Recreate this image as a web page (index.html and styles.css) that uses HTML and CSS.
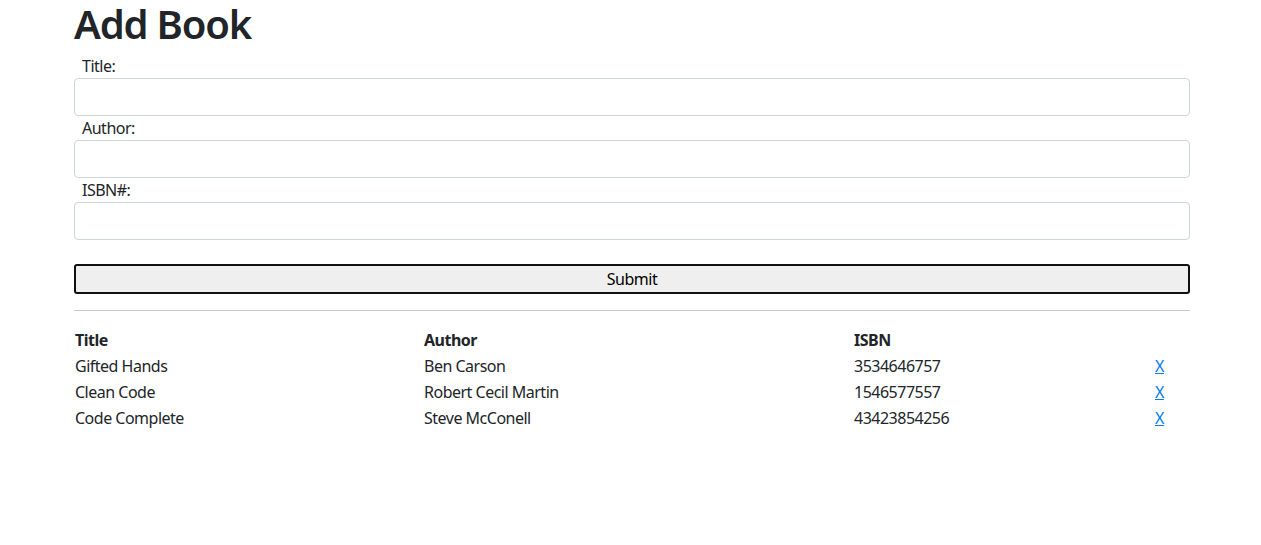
FILE: index.html
```html
<!DOCTYPE html>
<html lang="en">
<head>
<meta charset="utf-8">
<title>Add Book</title>
<link rel="stylesheet" href="styles.css">
</head>
<body>
<div class="container">
  <h1 class="title">Add Book</h1>
  <form class="book-form">
    <label class="field-label" for="title">Title:</label>
    <input class="field-input" id="title" type="text">
    <label class="field-label" for="author">Author:</label>
    <input class="field-input" id="author" type="text">
    <label class="field-label" for="isbn">ISBN#:</label>
    <input class="field-input" id="isbn" type="text">
    <button class="submit-btn" type="button">Submit</button>
  </form>
  <hr class="divider">
  <div class="book-table">
    <div class="cell head">Title</div>
    <div class="cell head">Author</div>
    <div class="cell head">ISBN</div>
    <div class="cell head"></div>

    <div class="cell">Gifted Hands</div>
    <div class="cell">Ben Carson</div>
    <div class="cell">3534646757</div>
    <div class="cell"><a class="delete" href="#">X</a></div>

    <div class="cell">Clean Code</div>
    <div class="cell">Robert Cecil Martin</div>
    <div class="cell">1546577557</div>
    <div class="cell"><a class="delete" href="#">X</a></div>

    <div class="cell">Code Complete</div>
    <div class="cell">Steve McConell</div>
    <div class="cell">43423854256</div>
    <div class="cell"><a class="delete" href="#">X</a></div>
  </div>
</div>
</body>
</html>
```
FILE: styles.css
```css
* { box-sizing: border-box; }
html, body {
  margin: 0;
  background: #fff;
}
body {
  font-family: "Noto Sans", "Open Sans", sans-serif;
  font-size: 16px;
  line-height: 1.5;
  color: #212529;
  letter-spacing: -0.5px;
}
.container {
  width: 1116px;
  margin: 0 0 0 74px;
}
.title {
  margin: 0 0 6px;
  font-size: 40px;
  font-weight: 600;
  line-height: 1.2;
  letter-spacing: -1.2px;
}
.book-form {
  display: flex;
  flex-direction: column;
}
.field-label {
  display: block;
  padding-left: 8px;
  height: 24px;
}
.field-input {
  display: block;
  width: 100%;
  height: 38px;
  border: 1px solid #ced4da;
  border-radius: 4px;
  font: inherit;
  padding: 6px 12px;
}
.submit-btn {
  margin-top: 24px;
  height: 30px;
  width: 100%;
  border: 2px solid #111;
  border-radius: 3px;
  background: #efefef;
  font: inherit;
  letter-spacing: -0.5px;
  color: #000;
  padding: 1px 6px;
}
.divider {
  margin: 16px 0;
  border: 0;
  border-top: 1px solid #c8c8c8;
  height: 0;
}
.book-table {
  display: grid;
  grid-template-columns: 349px 430px 301px 1fr;
}
.cell {
  padding: 1px 0 1px 1px;
  line-height: 24px;
}
.head { font-weight: 700; }
.delete {
  color: #007bff;
  text-decoration: underline;
}
```
